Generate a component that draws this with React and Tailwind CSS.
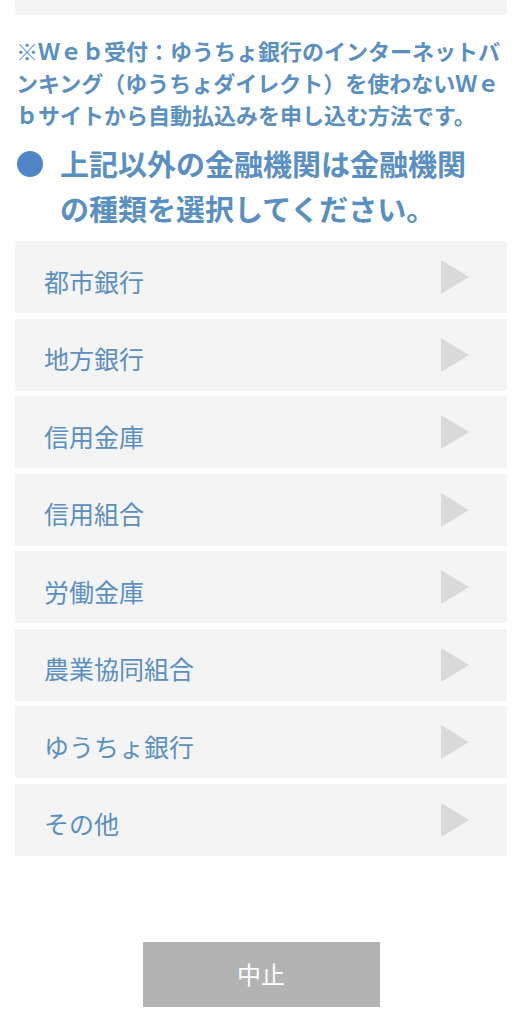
const banks = [
  "都市銀行",
  "地方銀行",
  "信用金庫",
  "信用組合",
  "労働金庫",
  "農業協同組合",
  "ゆうちょ銀行",
  "その他",
];

export default function App() {
  return (
    <div
      className="min-h-[1024px] bg-white"
      style={{ fontFamily: '"Noto Sans CJK JP", "Noto Sans", sans-serif' }}
    >
      <div className="mx-[15px] h-[15px] bg-[#f4f4f4]" />

      <p className="ml-[16px] mr-[15px] mt-[19px] text-[22px] font-bold leading-[32px] text-[#5a8fc2]">
        ※Ｗｅｂ受付：ゆうちょ銀行のインターネットバンキング（ゆうちょダイレクト）を使わないＷｅｂサイトから自動払込みを申し込む方法です。
      </p>

      <div className="mt-[11px] flex items-start pl-[17px] pr-[15px]">
        <span className="mt-[10px] h-[26px] w-[26px] shrink-0 rounded-full bg-[#4f86c6]" />
        <h2 className="ml-[17px] w-[420px] text-[29px] font-bold leading-[45px] text-[#5a8fc2]">
          上記以外の金融機関は金融機関の種類を選択してください。
        </h2>
      </div>

      <ul className="mx-[15px] mt-[10px] flex flex-col gap-[5.5px]">
        {banks.map((bank) => (
          <li
            key={bank}
            className="flex h-[72px] items-center justify-between bg-[#f4f4f4] pl-[29px] pr-[38px]"
          >
            <span className="pt-[8px] text-[25px] leading-none text-[#5b8fbf]">{bank}</span>
            <svg width="28" height="34" viewBox="0 0 28 34">
              <polygon points="0,0 28,17 0,34" fill="#d9d9d9" />
            </svg>
          </li>
        ))}
      </ul>

      <div className="mt-[86px] flex justify-center">
        <button
          type="button"
          className="h-[65px] w-[237px] bg-[#b3b3b3] text-[24px] text-white"
        >
          中止
        </button>
      </div>
    </div>
  );
}
